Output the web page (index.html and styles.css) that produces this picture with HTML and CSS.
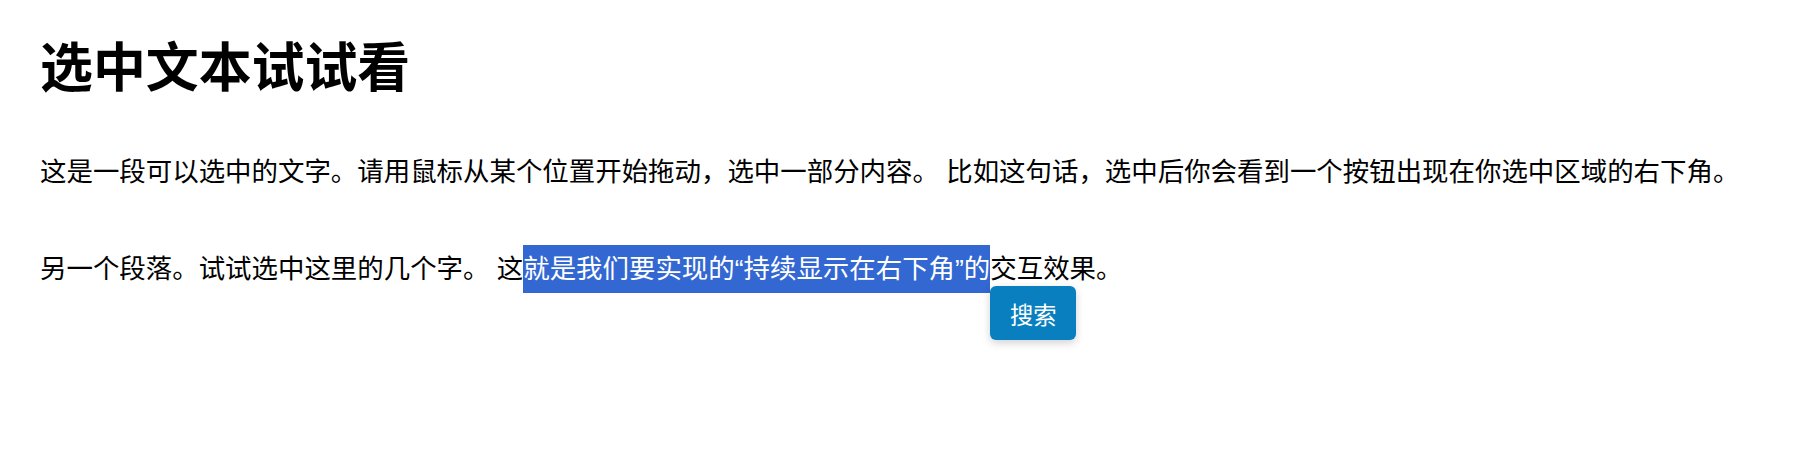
FILE: index.html
```html
<!DOCTYPE html>
<html lang="zh-CN">
<head>
<meta charset="utf-8">
<title>选中文本试试看</title>
<link rel="stylesheet" href="styles.css">
</head>
<body>
  <main class="page">
    <h1 class="title">选中文本试试看</h1>
    <p class="para">这是一段可以选中的文字。请用鼠标从某个位置开始拖动，选中一部分内容。 比如这句话，选中后你会看到一个按钮出现在你选中区域的右下角。</p>
    <p class="para">另一个段落。试试选中这里的几个字。 这<span class="selected">就是我们要实现的“持续显示在右下角”的<button class="search-btn" type="button">搜索</button></span>交互效果。</p>
  </main>
</body>
</html>
```

FILE: styles.css
```css
html, body {
  margin: 0;
  padding: 0;
  background: #ffffff;
}

body {
  font-family: "Liberation Sans", "Noto Sans CJK SC", sans-serif;
  color: #000000;
}

.page {
  padding: 37px 40px;
}

.title {
  margin: 0 0 49px;
  font-size: 52.9px;
  line-height: 63.4px;
  font-weight: 700;
}

.para {
  margin: 0 0 49.2px;
  font-size: 26.45px;
  line-height: 47.5px;
}

.selected {
  position: relative;
  background: #3367d1;
  color: #ffffff;
  padding: 9px 0;
}

.search-btn {
  position: absolute;
  left: 100%;
  top: calc(100% - 6.6px);
  box-sizing: border-box;
  width: 86px;
  height: 54px;
  padding: 5px 0 0;
  margin: 0;
  border: none;
  border-radius: 6px;
  background: #0a7fbf;
  color: #ffffff;
  font-family: "Liberation Sans", "Noto Sans CJK SC", sans-serif;
  font-size: 23.3px;
  line-height: 48px;
  text-align: center;
  box-shadow: 0 3px 9px rgba(0, 0, 0, 0.18);
  cursor: pointer;
}
```
